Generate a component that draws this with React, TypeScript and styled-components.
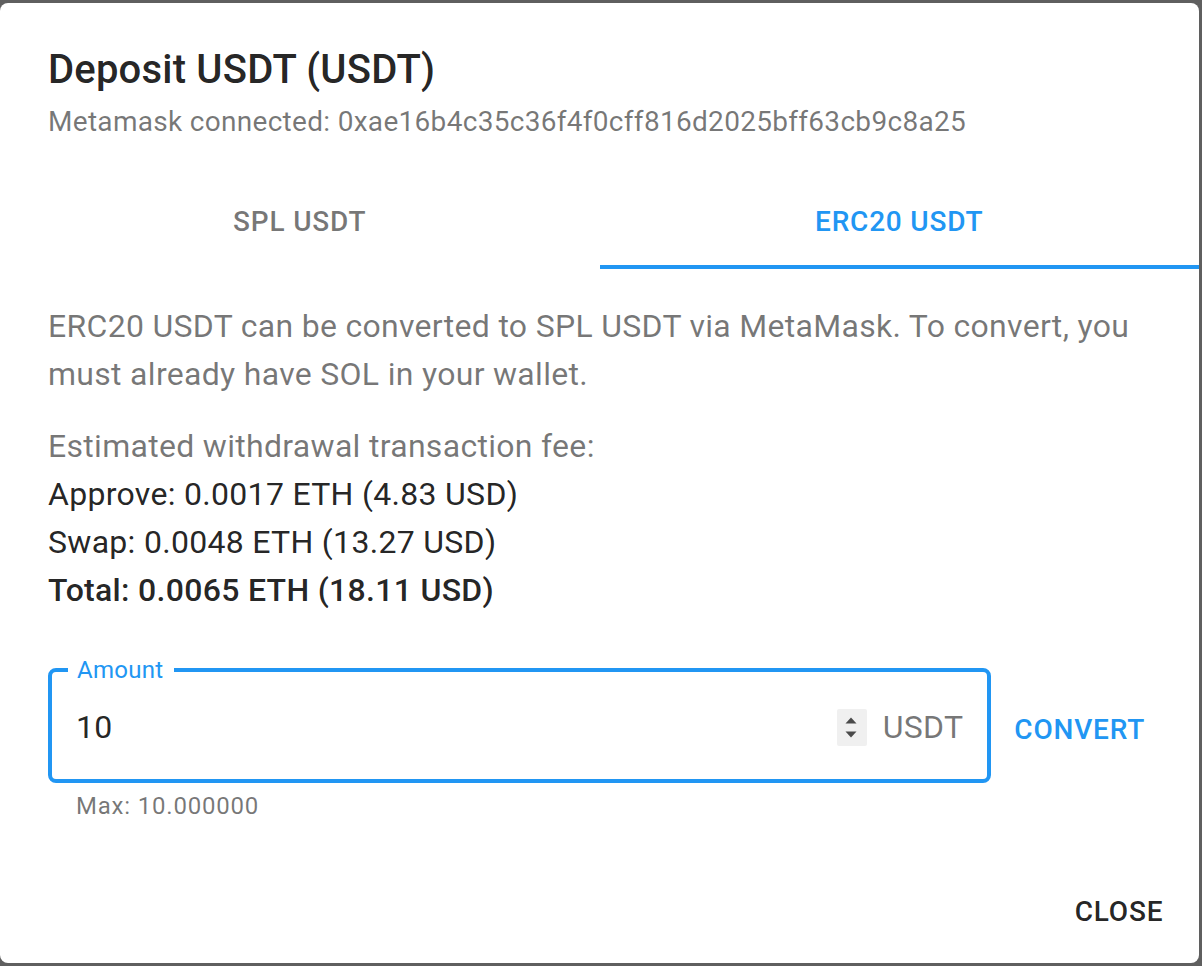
import React from "react";
import styled, { createGlobalStyle } from "styled-components";

const GlobalStyle = createGlobalStyle`
  html, body {
    margin: 0;
    padding: 0;
    background: #5f5f5f;
  }
  body {
    font-family: Roboto, "Liberation Sans", Arial, sans-serif;
    -webkit-font-smoothing: antialiased;
  }
  *, *::before, *::after {
    box-sizing: border-box;
  }
`;

const BLUE = "#2196f3";
const TEXT = "rgba(0, 0, 0, 0.87)";
const MUTED = "rgba(0, 0, 0, 0.54)";

const Backdrop = styled.div`
  width: 1202px;
  height: 966px;
  padding: 3px 3px 3px 0;
  display: flex;
`;

const Dialog = styled.section`
  flex: 1;
  display: flex;
  flex-direction: column;
  background: #fff;
  border-radius: 8px;
  overflow: hidden;
`;

const Header = styled.header`
  padding: 35px 48px 29px;
`;

const Title = styled.h2`
  margin: 0;
  font-size: 40px;
  font-weight: 500;
  line-height: 64px;
  letter-spacing: 0.2px;
  color: ${TEXT};
`;

const Subtitle = styled.p`
  margin: 0;
  font-size: 28px;
  line-height: 40px;
  letter-spacing: 0.3px;
  color: ${MUTED};
`;

const TabList = styled.div`
  display: flex;
  height: 98px;
`;

const Tab = styled.button<{ $active?: boolean }>`
  flex: 1;
  border: 0;
  border-bottom: 4px solid ${(p) => (p.$active ? BLUE : "transparent")};
  background: none;
  padding: 6px 24px 0;
  font-family: inherit;
  font-size: 28px;
  font-weight: 500;
  letter-spacing: 0.8px;
  text-transform: uppercase;
  color: ${(p) => (p.$active ? BLUE : MUTED)};
  cursor: pointer;
`;

const Content = styled.div`
  flex: 1;
  padding: 33px 38px 0 48px;
`;

const Paragraph = styled.p`
  margin: 0 0 24px;
  font-size: 32px;
  line-height: 48px;
  letter-spacing: 0.3px;
  color: ${MUTED};
`;

const FeeList = styled.div`
  display: flex;
  flex-direction: column;
`;

const FeeLine = styled.div<{ $tone: "muted" | "normal" | "strong" }>`
  font-size: 32px;
  line-height: 48px;
  letter-spacing: 0.3px;
  color: ${(p) => (p.$tone === "muted" ? MUTED : TEXT)};
  font-weight: ${(p) => (p.$tone === "strong" ? 500 : 400)};
`;

const FieldRow = styled.div`
  display: flex;
  align-items: flex-start;
  gap: 7px;
  margin-top: 44px;
`;

const Field = styled.div`
  flex: 1;
  min-width: 0;
`;

const Outline = styled.fieldset`
  margin: 0;
  padding: 0;
  min-width: 0;
  border: 4px solid ${BLUE};
  border-radius: 8px;
`;

const Label = styled.legend`
  margin-left: 16px;
  padding: 0 10px 0 9px;
  font-size: 24px;
  line-height: 24px;
  letter-spacing: 0.3px;
  color: ${BLUE};
`;

const InputRow = styled.div`
  display: flex;
  align-items: center;
  height: 87px;
  margin-bottom: 10px;
  padding: 3px 24px 0;
`;

const AmountInput = styled.input`
  flex: 1;
  min-width: 0;
  border: 0;
  outline: none;
  background: transparent;
  padding: 0;
  font-family: inherit;
  font-size: 32px;
  letter-spacing: 0.3px;
  color: ${TEXT};
`;

const Spinner = styled.span`
  width: 30px;
  height: 37px;
  display: flex;
  align-items: center;
  justify-content: center;
  background: #f0f0f0;
  border-radius: 2px;
`;

const Unit = styled.span`
  margin-left: 16px;
  font-size: 32px;
  letter-spacing: 0.3px;
  color: ${MUTED};
`;

const Helper = styled.p`
  margin: 3px 28px 0;
  font-size: 24px;
  line-height: 40px;
  letter-spacing: 0.8px;
  color: ${MUTED};
`;

const TextButton = styled.button<{ $tone: "primary" | "default" }>`
  height: 72px;
  min-width: 128px;
  padding: 0 16px;
  border: 0;
  border-radius: 8px;
  background: none;
  font-family: inherit;
  font-size: 28px;
  font-weight: 500;
  letter-spacing: 0.8px;
  text-transform: uppercase;
  color: ${(p) => (p.$tone === "primary" ? BLUE : TEXT)};
  cursor: pointer;
`;

const ConvertButton = styled(TextButton)`
  margin-top: 35px;
`;

const Actions = styled.footer`
  display: flex;
  justify-content: flex-end;
  padding: 16px;
`;

function SpinIcon() {
  return (
    <svg width="30" height="37" viewBox="0 0 30 37" aria-hidden="true">
      <polygon points="8.5,14.5 14,8.5 19.5,14.5" fill="#4a4a4a" />
      <polygon points="8.5,22.5 14,28.5 19.5,22.5" fill="#4a4a4a" />
    </svg>
  );
}

export default function App() {
  return (
    <>
      <GlobalStyle />
      <Backdrop>
        <Dialog role="dialog" aria-labelledby="deposit-title">
          <Header>
            <Title id="deposit-title">Deposit USDT (USDT)</Title>
            <Subtitle>Metamask connected: 0xae16b4c35c36f4f0cff816d2025bff63cb9c8a25</Subtitle>
          </Header>
          <TabList role="tablist">
            <Tab role="tab">SPL USDT</Tab>
            <Tab role="tab" $active aria-selected="true">
              ERC20 USDT
            </Tab>
          </TabList>
          <Content>
            <Paragraph>
              ERC20 USDT can be converted to SPL USDT via MetaMask. To convert, you must already have SOL
              in your wallet.
            </Paragraph>
            <FeeList>
              <FeeLine $tone="muted">Estimated withdrawal transaction fee:</FeeLine>
              <FeeLine $tone="normal">Approve: 0.0017 ETH (4.83 USD)</FeeLine>
              <FeeLine $tone="normal">Swap: 0.0048 ETH (13.27 USD)</FeeLine>
              <FeeLine $tone="strong">Total: 0.0065 ETH (18.11 USD)</FeeLine>
            </FeeList>
            <FieldRow>
              <Field>
                <Outline>
                  <Label>Amount</Label>
                  <InputRow>
                    <AmountInput type="text" defaultValue="10" aria-label="Amount" />
                    <Spinner>
                      <SpinIcon />
                    </Spinner>
                    <Unit>USDT</Unit>
                  </InputRow>
                </Outline>
                <Helper>Max: 10.000000</Helper>
              </Field>
              <ConvertButton $tone="primary">Convert</ConvertButton>
            </FieldRow>
          </Content>
          <Actions>
            <TextButton $tone="default">Close</TextButton>
          </Actions>
        </Dialog>
      </Backdrop>
    </>
  );
}
